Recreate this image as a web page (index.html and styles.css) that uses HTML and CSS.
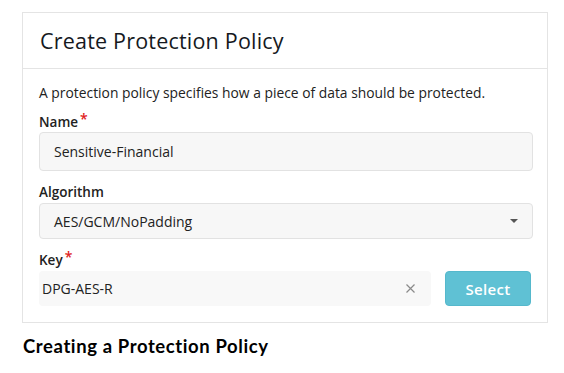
FILE: index.html
```html
<!DOCTYPE html>
<html>
<head>
<meta charset="utf-8">
<link rel="stylesheet" href="styles.css">
</head>
<body>
<div class="page">
  <div class="card">
    <div class="card-header">Create Protection Policy</div>
    <div class="card-body">
      <p class="desc">A protection policy specifies how a piece of data should be protected.</p>
      <div class="field first">
        <div class="label">Name<span class="req">*</span></div>
        <div class="input name-input">Sensitive-Financial</div>
      </div>
      <div class="field">
        <div class="label">Algorithm</div>
        <div class="input select-input">
          <span>AES/GCM/NoPadding</span>
          <span class="caret"></span>
        </div>
      </div>
      <div class="field">
        <div class="label">Key<span class="req">*</span></div>
        <div class="key-row">
          <div class="key-input">
            <span>DPG-AES-R</span>
            <svg class="clear" width="9" height="9" viewBox="0 0 9 9"><path d="M0.5 0.5 L8.5 8.5 M8.5 0.5 L0.5 8.5" stroke="#8a8a8a" stroke-width="1.2" fill="none"/></svg>
          </div>
          <div class="btn">Select</div>
        </div>
      </div>
    </div>
  </div>
  <div class="caption">Creating a Protection Policy</div>
</div>
</body>
</html>
```

FILE: styles.css
```css
html, body {
  margin: 0;
  padding: 0;
  background: #ffffff;
}
.page {
  padding: 12px 0 0 22px;
  width: 526px;
  font-family: "Open Sans", "Liberation Sans", sans-serif;
  color: #222;
}
.card {
  border: 1px solid #e4e4e4;
  box-sizing: border-box;
  height: 311px;
}
.card-header {
  height: 55px;
  border-bottom: 1px solid #e4e4e4;
  box-sizing: content-box;
  display: flex;
  align-items: center;
  padding-left: 17px;
  font-size: 21.5px;
  font-weight: 500;
  color: #15191e;
  letter-spacing: 0.2px;
}
.card-body {
  padding: 0 14px 0 16px;
}
.desc {
  margin: 14px 0 0 0;
  font-size: 13.85px;
  line-height: 20px;
  color: #222;
}
.label {
  font-size: 13.5px;
  font-weight: 600;
  line-height: 18px;
  margin-top: 12px;
  margin-bottom: 2px;
  color: #222;
}
.field.first .label {
  margin-top: 10px;
  margin-bottom: 1px;
}
.req {
  color: #e02020;
  font-size: 14px;
  position: relative;
  top: -3px;
  margin-left: 2px;
}
.input {
  background: #f7f7f7;
  border: 1px solid #e2e2e2;
  border-radius: 4px;
  box-sizing: border-box;
  font-size: 14px;
  color: #222;
  display: flex;
  align-items: center;
}
.name-input {
  height: 39px;
  padding-left: 14px;
}
.select-input {
  height: 36px;
  padding: 0 14px;
  justify-content: space-between;
}
.caret {
  width: 0;
  height: 0;
  border-left: 4px solid transparent;
  border-right: 4px solid transparent;
  border-top: 4px solid #555;
}
.key-row {
  display: flex;
  align-items: center;
  gap: 14px;
  margin-top: 1px;
}
.key-input {
  width: 392px;
  height: 35px;
  background: #f8f8f8;
  border-radius: 4px;
  display: flex;
  align-items: center;
  justify-content: space-between;
  padding: 0 16px 0 3px;
  box-sizing: border-box;
  font-size: 14px;
  color: #222;
}
.clear {
  display: block;
}
.btn {
  width: 86px;
  height: 35px;
  background: #5fc1d4;
  border: 1px solid #55b8cc;
  box-sizing: border-box;
  border-radius: 4px;
  color: #fff;
  font-weight: 600;
  font-size: 15px;
  display: flex;
  align-items: center;
  justify-content: center;
  letter-spacing: 0.3px;
}
.caption {
  margin-top: 12px;
  font-family: "Lato", "Liberation Sans", sans-serif;
  font-weight: 700;
  font-size: 18.5px;
  letter-spacing: 0.6px;
  color: #000;
  margin-left: 1px;
}
```
